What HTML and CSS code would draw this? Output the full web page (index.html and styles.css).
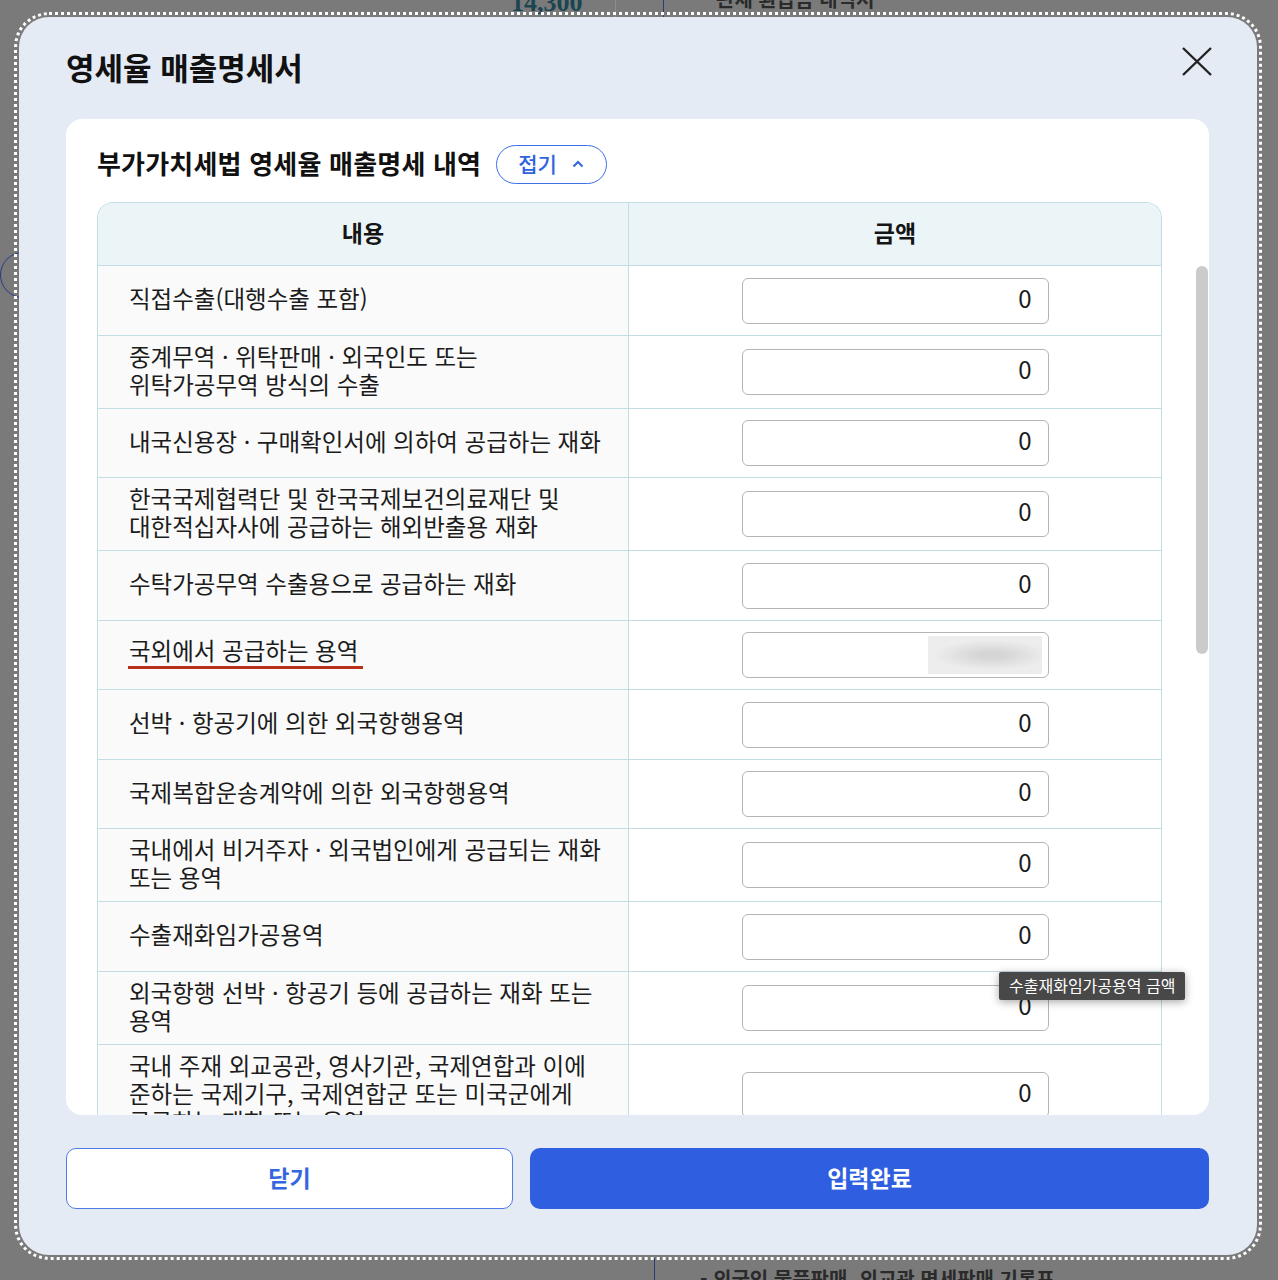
FILE: index.html
```html
<!DOCTYPE html>
<html lang="ko">

<head>
    <meta charset="utf-8">
    <title>영세율 매출명세서</title>
    <link rel="stylesheet" href="styles.css">
</head>

<body>
    <!-- page behind the dimmed overlay -->
    <div class="behind">
        <span class="behind-num">14,300</span>
        <span class="behind-line line-a"></span>
        <span class="behind-line line-b"></span>
        <span class="behind-line line-c"></span>
        <span class="behind-top">관세 환급금 내역서</span>
        <span class="behind-circle"></span>
        <span class="behind-bottom">- 외국인 물품판매, 외교관 면세판매 기록표</span>
    </div>

    <div class="overlay">
        <div class="modal">
            <div class="modal-head">
                <h1>영세율 매출명세서</h1>
                <button class="close-x" aria-label="닫기">
                    <svg width="32" height="32" viewBox="0 0 32 32">
                        <path d="M2 3 L30 30 M30 3 L2 30" stroke="#222" stroke-width="2.4" fill="none"/>
                    </svg>
                </button>
            </div>

            <div class="card">
                <div class="card-head">
                    <h2>부가가치세법 영세율 매출명세 내역</h2>
                    <button class="fold">접기
                        <svg width="12" height="8" viewBox="0 0 12 8">
                            <path d="M1.5 6.5 L6 2 L10.5 6.5" stroke="#2f63e0" stroke-width="2" fill="none"/>
                        </svg>
                    </button>
                </div>

                <div class="sheet">
                    <div class="row head">
                        <div class="c-desc">내용</div>
                        <div class="c-amt">금액</div>
                    </div>
                    <div class="row">
                        <div class="c-desc">직접수출(대행수출 포함)</div>
                        <div class="c-amt"><div class="amount">0</div></div>
                    </div>
                    <div class="row">
                        <div class="c-desc">중계무역 · 위탁판매 · 외국인도 또는<br>위탁가공무역 방식의 수출</div>
                        <div class="c-amt"><div class="amount">0</div></div>
                    </div>
                    <div class="row">
                        <div class="c-desc">내국신용장 · 구매확인서에 의하여 공급하는 재화</div>
                        <div class="c-amt"><div class="amount">0</div></div>
                    </div>
                    <div class="row">
                        <div class="c-desc">한국국제협력단 및 한국국제보건의료재단 및<br>대한적십자사에 공급하는 해외반출용 재화</div>
                        <div class="c-amt"><div class="amount">0</div></div>
                    </div>
                    <div class="row">
                        <div class="c-desc">수탁가공무역 수출용으로 공급하는 재화</div>
                        <div class="c-amt"><div class="amount">0</div></div>
                    </div>
                    <div class="row">
                        <div class="c-desc"><span class="mark">국외에서 공급하는 용역</span></div>
                        <div class="c-amt"><div class="amount masked"><span class="blur"></span></div></div>
                    </div>
                    <div class="row">
                        <div class="c-desc">선박 · 항공기에 의한 외국항행용역</div>
                        <div class="c-amt"><div class="amount">0</div></div>
                    </div>
                    <div class="row">
                        <div class="c-desc">국제복합운송계약에 의한 외국항행용역</div>
                        <div class="c-amt"><div class="amount">0</div></div>
                    </div>
                    <div class="row">
                        <div class="c-desc">국내에서 비거주자 · 외국법인에게 공급되는 재화<br>또는 용역</div>
                        <div class="c-amt"><div class="amount">0</div></div>
                    </div>
                    <div class="row">
                        <div class="c-desc">수출재화임가공용역</div>
                        <div class="c-amt">
                            <div class="amount">0</div>
                            <div class="tooltip">수출재화임가공용역 금액</div>
                        </div>
                    </div>
                    <div class="row">
                        <div class="c-desc">외국항행 선박 · 항공기 등에 공급하는 재화 또는<br>용역</div>
                        <div class="c-amt"><div class="amount">0</div></div>
                    </div>
                    <div class="row">
                        <div class="c-desc">국내 주재 외교공관, 영사기관, 국제연합과 이에<br>준하는 국제기구, 국제연합군 또는 미국군에게<br>공급하는 재화 또는 용역</div>
                        <div class="c-amt"><div class="amount">0</div></div>
                    </div>
                </div>

                <div class="scroll-thumb"></div>
            </div>

            <div class="modal-foot">
                <button class="btn-close">닫기</button>
                <button class="btn-done">입력완료</button>
            </div>
        </div>
    </div>
</body>

</html>
```

FILE: styles.css
```css
body {
    margin: 0;
    height: 1280px;
    overflow: hidden;
    position: relative;
    background-color: #7a7a7b;
    font-family: "Noto Sans CJK KR", "Noto Sans", sans-serif;
    color: #1c1c1c;
}

button {
    font-family: inherit;
    cursor: pointer;
}

/* dimmed page behind */
.behind {
    position: absolute;
    inset: 0;
}

.behind-num {
    position: absolute;
    left: 511px;
    top: -12px;
    font-family: "Liberation Serif", serif;
    font-weight: bold;
    font-size: 26px;
    color: #1b4651;
}

.behind-line {
    position: absolute;
    width: 1px;
    height: 20px;
    top: 0;
}

.line-a {
    left: 615px;
    background-color: #8d8d90;
}

.line-b {
    left: 663px;
    background-color: #2c3c70;
}

.line-c {
    left: 654px;
    top: 1258px;
    height: 22px;
    background-color: #2c3c70;
}

.behind-top {
    position: absolute;
    left: 716px;
    top: -16px;
    font-size: 20px;
    font-weight: bold;
    color: #2a2a2a;
}

.behind-circle {
    position: absolute;
    left: 0;
    top: 252px;
    width: 44px;
    height: 44px;
    border: 1.5px solid #26398a;
    border-radius: 50%;
}

.behind-bottom {
    position: absolute;
    left: 700px;
    top: 1264px;
    font-size: 20px;
    font-weight: bold;
    color: #2a2a2a;
}

/* modal */
.overlay {
    position: relative;
    padding: 17px 21px 25px 19px;
}

.modal {
    height: 1238px;
    box-sizing: border-box;
    padding: 32px 48px 46px 47px;
    background-color: #e4ebf5;
    border-radius: 30px;
    outline: 3px dotted #fff;
    outline-offset: 2px;
    display: flex;
    flex-direction: column;
}

.modal-head {
    display: flex;
    justify-content: space-between;
    align-items: flex-start;
    height: 40px;
}

.modal-head h1 {
    margin: 0;
    font-size: 31px;
    line-height: 36px;
    font-weight: bold;
    color: #111;
}

.close-x {
    margin: -4px -4px 0 0;
    padding: 0;
    border: none;
    background: none;
    width: 32px;
    height: 32px;
}

.close-x svg {
    display: block;
}

/* white card */
.card {
    position: relative;
    margin-top: 30px;
    height: 996px;
    box-sizing: border-box;
    padding: 26px 47px 0 31px;
    background-color: #fff;
    border-radius: 16px;
    overflow: hidden;
}

.card-head {
    display: flex;
    align-items: center;
    gap: 15px;
    height: 39px;
}

.card-head h2 {
    margin: 0;
    padding-bottom: 4px;
    font-size: 26px;
    letter-spacing: 0.2px;
    font-weight: bold;
    color: #111;
    white-space: nowrap;
}

.fold {
    display: flex;
    align-items: center;
    gap: 15px;
    height: 39px;
    box-sizing: border-box;
    padding: 0 22px 3px 21px;
    border: 1.5px solid #3d6fe6;
    border-radius: 20px;
    background-color: #fff;
    color: #2f63e0;
    font-size: 21px;
    font-weight: 500;
}

.fold svg {
    margin-top: 2px;
}

.sheet {
    margin-top: 18px;
    border: 1px solid #c2dee4;
    border-bottom: none;
    border-radius: 16px 16px 0 0;
}

.row {
    display: grid;
    grid-template-columns: 531px 1fr;
    border-top: 1px solid #c2dee4;
}

.row.head {
    border-top: none;
    border-radius: 15px 15px 0 0;
    background-color: #ebf5f7;
}

.row.head .c-desc,
.row.head .c-amt {
    background: none;
    padding: 0 0 5px;
    justify-content: center;
    height: 62px;
    box-sizing: border-box;
    font-size: 23px;
    font-weight: bold;
    color: #151515;
}

.c-desc {
    display: flex;
    align-items: center;
    padding: 6px 31px 10px;
    background-color: #fafafa;
    border-right: 1px solid #c2dee4;
    font-size: 23.5px;
    line-height: 28px;
    white-space: nowrap;
    color: #1c1c1c;
}

.c-amt {
    position: relative;
    display: flex;
    align-items: center;
    justify-content: center;
    padding: 11.5px 0 11px;
}

.amount {
    width: 307px;
    height: 46px;
    box-sizing: border-box;
    padding-right: 16px;
    border: 1.5px solid #b4b4b4;
    border-radius: 6px;
    background-color: #fff;
    font-size: 24px;
    line-height: 38px;
    text-align: right;
    color: #1c1c1c;
}

.amount.masked {
    display: flex;
    justify-content: flex-end;
    align-items: center;
    padding: 0 6px;
}

.blur {
    width: 114px;
    height: 38px;
    background: radial-gradient(ellipse 50% 40% at 55% 50%, #d5d5d5 20%, #ededed 100%);
}

.mark {
    display: inline-block;
    margin-left: -1px;
    padding: 0 5px 2px 1px;
    border-bottom: 3px solid #b8301c;
}

.tooltip {
    position: absolute;
    z-index: 5;
    left: 370px;
    top: 70px;
    height: 28px;
    padding: 0 10px;
    background-color: #484848;
    color: #fff;
    font-size: 16px;
    line-height: 27px;
    white-space: nowrap;
    border-radius: 2px;
    box-shadow: 0 2px 8px rgba(0, 0, 0, 0.35);
}

.scroll-thumb {
    position: absolute;
    right: 1px;
    top: 147px;
    width: 12px;
    height: 388px;
    border-radius: 6px;
    background-color: #cbcbcb;
}

/* footer buttons */
.modal-foot {
    display: flex;
    gap: 17px;
    margin-top: 33px;
    height: 61px;
}

.btn-close,
.btn-done {
    padding-bottom: 4px;
    border-radius: 10px;
    font-size: 23px;
    font-weight: bold;
}

.btn-close {
    width: 447px;
    background-color: #fff;
    border: 1.5px solid #4d7ce6;
    color: #3366e0;
}

.btn-done {
    flex: 1;
    border: none;
    background-color: #2f5fe0;
    color: #fff;
}
```
